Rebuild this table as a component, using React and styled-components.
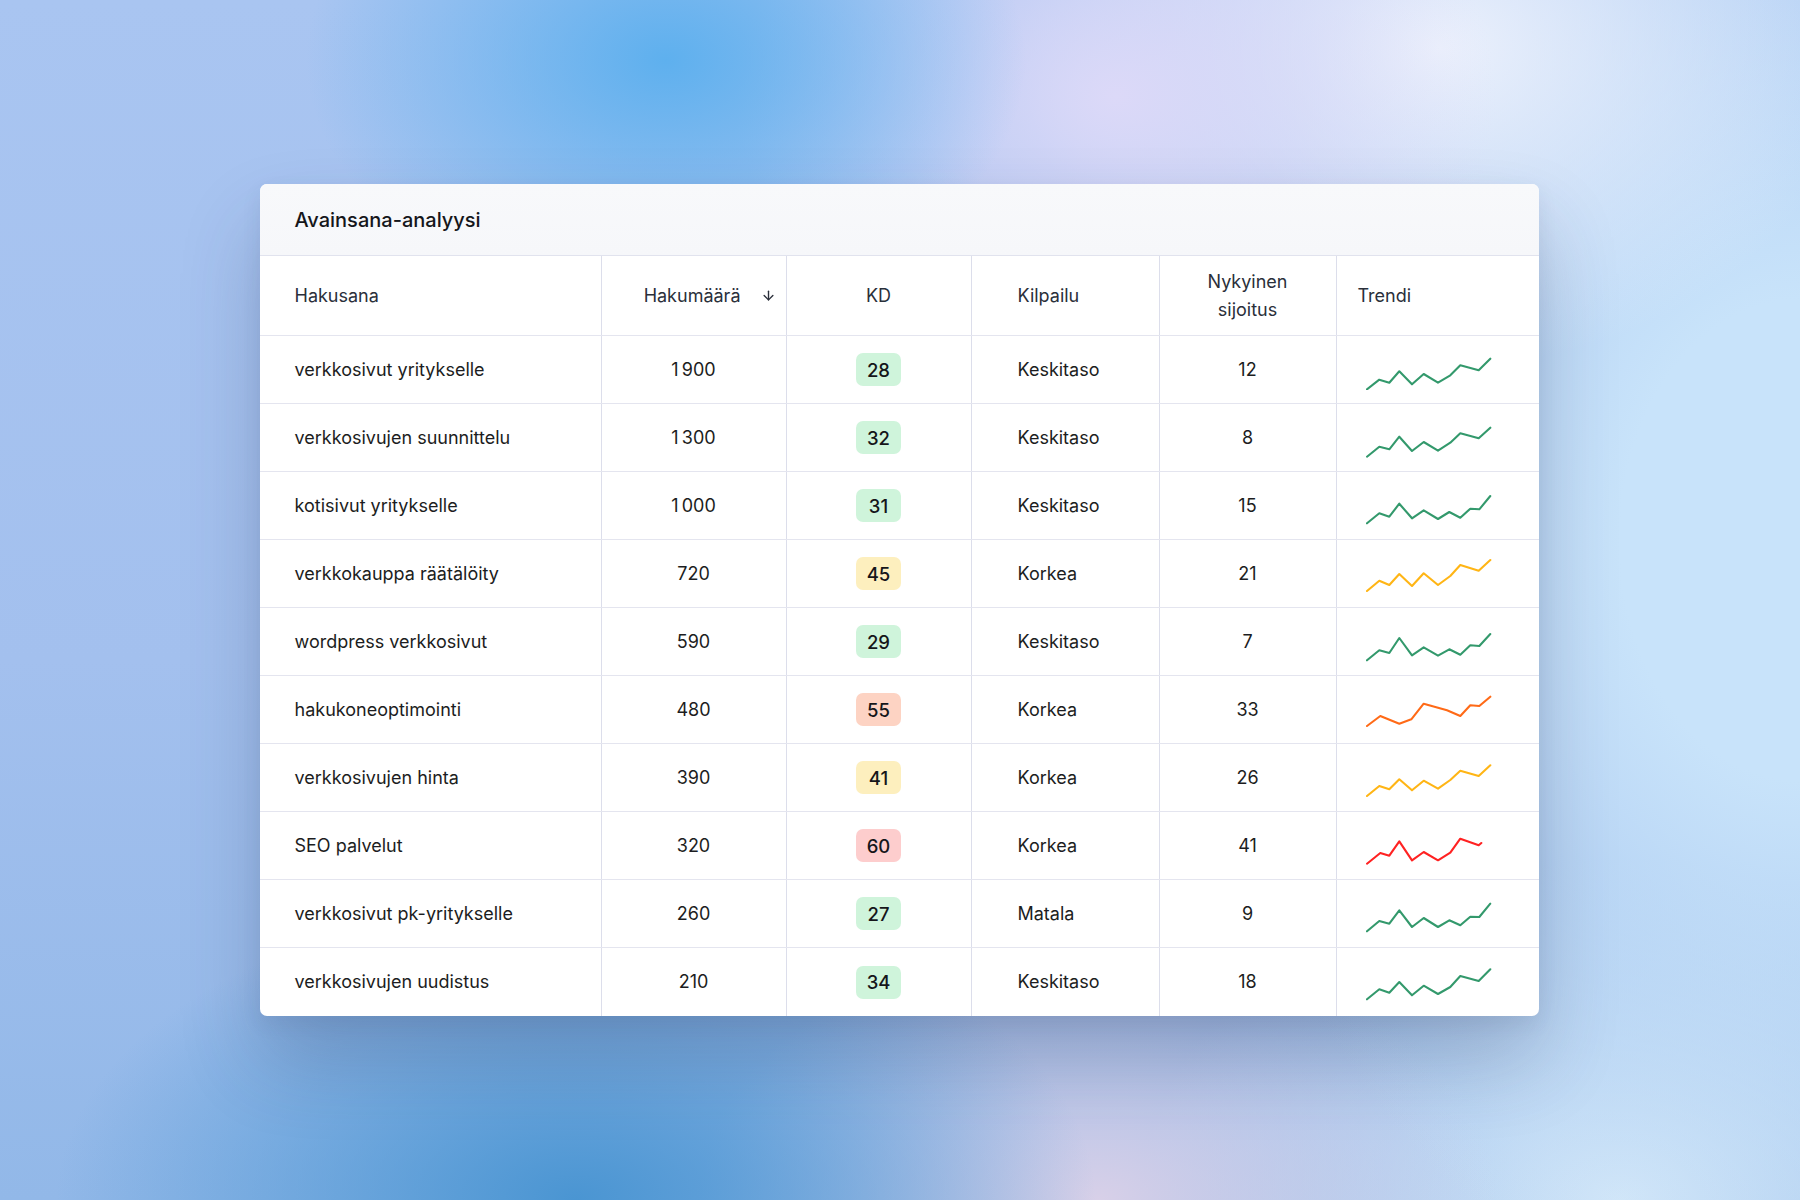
import React from 'react'
import styled, { createGlobalStyle } from 'styled-components'
import { ArrowDown } from 'lucide-react'

const GlobalStyle = createGlobalStyle`
    * { box-sizing: border-box; }
    html, body { margin: 0; padding: 0; }
    body {
        font-family: Inter, "Noto Sans", sans-serif;
        color: #1c1d21;
    }
`

const Page = styled.div`
    width: 100%;
    min-height: 100vh;
    display: flex;
    align-items: center;
    justify-content: center;
    padding-right: 2px;
    background:
        radial-gradient(ellipse 360px 250px at 37% 5%, #5eb0ee 0%, rgba(94, 176, 238, 0) 100%),
        radial-gradient(ellipse 380px 300px at 62% 8%, #dcd9f8 0%, rgba(220, 217, 248, 0) 100%),
        radial-gradient(ellipse 420px 320px at 80% 4%, #ecf1fc 0%, rgba(236, 241, 252, 0) 100%),
        radial-gradient(ellipse 600px 800px at 100% 45%, #c8e3fa 0%, #c8e3fa 30%, rgba(200, 227, 250, 0) 100%),
        radial-gradient(ellipse 520px 300px at 32% 100%, #4a95d2 0%, rgba(74, 149, 210, 0) 100%),
        radial-gradient(ellipse 400px 260px at 61% 100%, #d8d0e8 0%, rgba(216, 208, 232, 0) 100%),
        radial-gradient(ellipse 480px 340px at 90% 100%, #d2e6f8 0%, rgba(210, 230, 248, 0) 100%),
        linear-gradient(180deg, #a9c5f1 0%, #a3c0ee 55%, #92b8e8 100%);
`

const Card = styled.div`
    width: 1279px;
    background: #ffffff;
    border-radius: 7px;
    overflow: hidden;
    box-shadow: 0 44px 80px rgba(40, 55, 90, 0.24), 0 8px 20px rgba(40, 55, 90, 0.08);
`

const TitleBar = styled.div`
    height: 72px;
    display: flex;
    align-items: center;
    padding-left: 35px;
    background: linear-gradient(180deg, #f8f9fb 0%, #f6f7fa 100%);
    border-bottom: 1px solid #e1e3ee;
    font-size: 20px;
    font-weight: 500;
    color: #15161a;
`

const Row = styled.div`
    display: grid;
    grid-template-columns: 341px 185px 185px 188px 177px 1fr;
    height: ${p => p.$head ? 80 : 68}px;
    border-bottom: ${p => p.$last ? 'none' : '1px solid #e4e5ef'};
`

const Cell = styled.div`
    display: flex;
    align-items: center;
    justify-content: ${p => p.$align === 'center' ? 'center' : p.$align === 'right' ? 'flex-end' : 'flex-start'};
    padding-left: ${p => p.$pl || 0}px;
    padding-right: ${p => p.$pr || 0}px;
    border-left: ${p => p.$first ? 'none' : '1px solid #dcdeeb'};
    font-size: 18px;
    color: ${p => p.$head ? '#2a2f3a' : '#1c1d21'};
    text-align: center;
    line-height: 28px;
`

const SortArrow = styled.span`
    display: inline-flex;
    margin-left: 20px;
    color: #2a2f3a;
`

const Badge = styled.span`
    display: inline-flex;
    align-items: center;
    justify-content: center;
    width: 45px;
    height: 33px;
    border-radius: 7px;
    font-size: 18.5px;
    font-weight: 500;
    color: #15161a;
    background: ${p => p.$bg};
`

const Spark = styled.svg`
    display: block;
    margin-left: 9px;
`

const badgeColors = {
    green: '#cff4db',
    yellow: '#fdefbe',
    orange: '#fdd3c3',
    red: '#fdcdcd',
}

const lineColors = {
    green: '#33996c',
    yellow: '#ffb515',
    orange: '#ff6a17',
    red: '#ff2222',
}

const shapeA = [0, 12.3, 22.3, 32.3, 45, 56.7, 71, 83.3, 93.3, 111.7, 123.3]
const shapeB = [0, 12.3, 22.3, 32.3, 45, 56.7, 71, 82.3, 93.3, 103.3, 112.3, 123.3]

const rows = [
    { kw: 'verkkosivut yritykselle', vol: '1\u202F900', kd: 28, tone: 'green', comp: 'Keskitaso', pos: 12,
      xs: shapeA, ys: [39.3, 29.7, 32.7, 21.3, 34.3, 24, 32.7, 25.3, 15.3, 20.3, 8.7] },
    { kw: 'verkkosivujen suunnittelu', vol: '1\u202F300', kd: 32, tone: 'green', comp: 'Keskitaso', pos: 8,
      xs: shapeA, ys: [38.7, 28.7, 31.3, 18.7, 33, 24, 32.7, 24.7, 15.3, 20.3, 9.7] },
    { kw: 'kotisivut yritykselle', vol: '1\u202F000', kd: 31, tone: 'green', comp: 'Keskitaso', pos: 15,
      xs: shapeB, ys: [37.3, 27.3, 30.7, 17.7, 32.3, 24.3, 33, 26, 31.7, 22.7, 23.3, 10] },
    { kw: 'verkkokauppa räätälöity', vol: '720', kd: 45, tone: 'yellow', comp: 'Korkea', pos: 21,
      xs: shapeA, ys: [37, 26.7, 31, 20, 32, 19.3, 31, 22, 11, 16.7, 6] },
    { kw: 'wordpress verkkosivut', vol: '590', kd: 29, tone: 'green', comp: 'Keskitaso', pos: 7,
      xs: shapeB, ys: [38.3, 28.3, 31, 16, 33.3, 25.3, 33.7, 27.3, 32.7, 23.3, 24, 12] },
    { kw: 'hakukoneoptimointi', vol: '480', kd: 55, tone: 'orange', comp: 'Korkea', pos: 33,
      xs: [0, 13.3, 32.3, 44.3, 56.7, 80, 93.3, 103.3, 112.3, 123.3], ys: [36, 26, 33.7, 29.3, 13.7, 20.3, 26, 15.3, 16, 6.7] },
    { kw: 'verkkosivujen hinta', vol: '390', kd: 41, tone: 'yellow', comp: 'Korkea', pos: 26,
      xs: shapeA, ys: [38, 28, 31.3, 21.3, 32.3, 22.7, 30.7, 22, 12.7, 18, 7.3] },
    { kw: 'SEO palvelut', vol: '320', kd: 60, tone: 'red', comp: 'Korkea', pos: 41,
      xs: [0, 13.3, 22.3, 32.3, 45, 56.7, 71, 83.3, 93.3, 111.7, 114.3], ys: [37.7, 27, 29.7, 15.3, 34.3, 26, 34.3, 26.7, 12.7, 19.3, 17] },
    { kw: 'verkkosivut pk-yritykselle', vol: '260', kd: 27, tone: 'green', comp: 'Matala', pos: 9,
      xs: shapeB, ys: [37.3, 27, 29.7, 16.3, 33, 24, 33, 26.3, 31.3, 22.7, 23, 9.7] },
    { kw: 'verkkosivujen uudistus', vol: '210', kd: 34, tone: 'green', comp: 'Keskitaso', pos: 18,
      xs: shapeA, ys: [37.3, 27.3, 30.7, 20, 33.3, 23.7, 32, 25, 14, 19, 7.3] },
]

const Sparkline = ({ xs, ys, color }) => {
    const points = xs.map((x, i) => `${x + 1},${ys[i]}`).join(' ')
    return (
        <Spark width="126" height="40" viewBox="0 0 126 40">
            <polyline points={points} fill="none" stroke={color} strokeWidth="2.1" strokeLinejoin="round" strokeLinecap="round" />
        </Spark>
    )
}

const App = () => {
    return (
        <Page>
            <GlobalStyle />
            <Card>
                <TitleBar>Avainsana-analyysi</TitleBar>

                <Row $head>
                    <Cell $head $first $pl={35}>Hakusana</Cell>
                    <Cell $head $align="right" $pr={10}>
                        Hakumäärä
                        <SortArrow><ArrowDown size={15} strokeWidth={2.2} /></SortArrow>
                    </Cell>
                    <Cell $head $align="center">KD</Cell>
                    <Cell $head $pl={46}>Kilpailu</Cell>
                    <Cell $head $align="center">Nykyinen<br />sijoitus</Cell>
                    <Cell $head $pl={21}>Trendi</Cell>
                </Row>

                {rows.map((r, i) => (
                    <Row key={r.kw} $last={i === rows.length - 1}>
                        <Cell $first $pl={35}>{r.kw}</Cell>
                        <Cell $align="center">{r.vol}</Cell>
                        <Cell $align="center"><Badge $bg={badgeColors[r.tone]}>{r.kd}</Badge></Cell>
                        <Cell $pl={46}>{r.comp}</Cell>
                        <Cell $align="center">{r.pos}</Cell>
                        <Cell $pl={20}><Sparkline xs={r.xs} ys={r.ys} color={lineColors[r.tone]} /></Cell>
                    </Row>
                ))}
            </Card>
        </Page>
    )
}

export default App
